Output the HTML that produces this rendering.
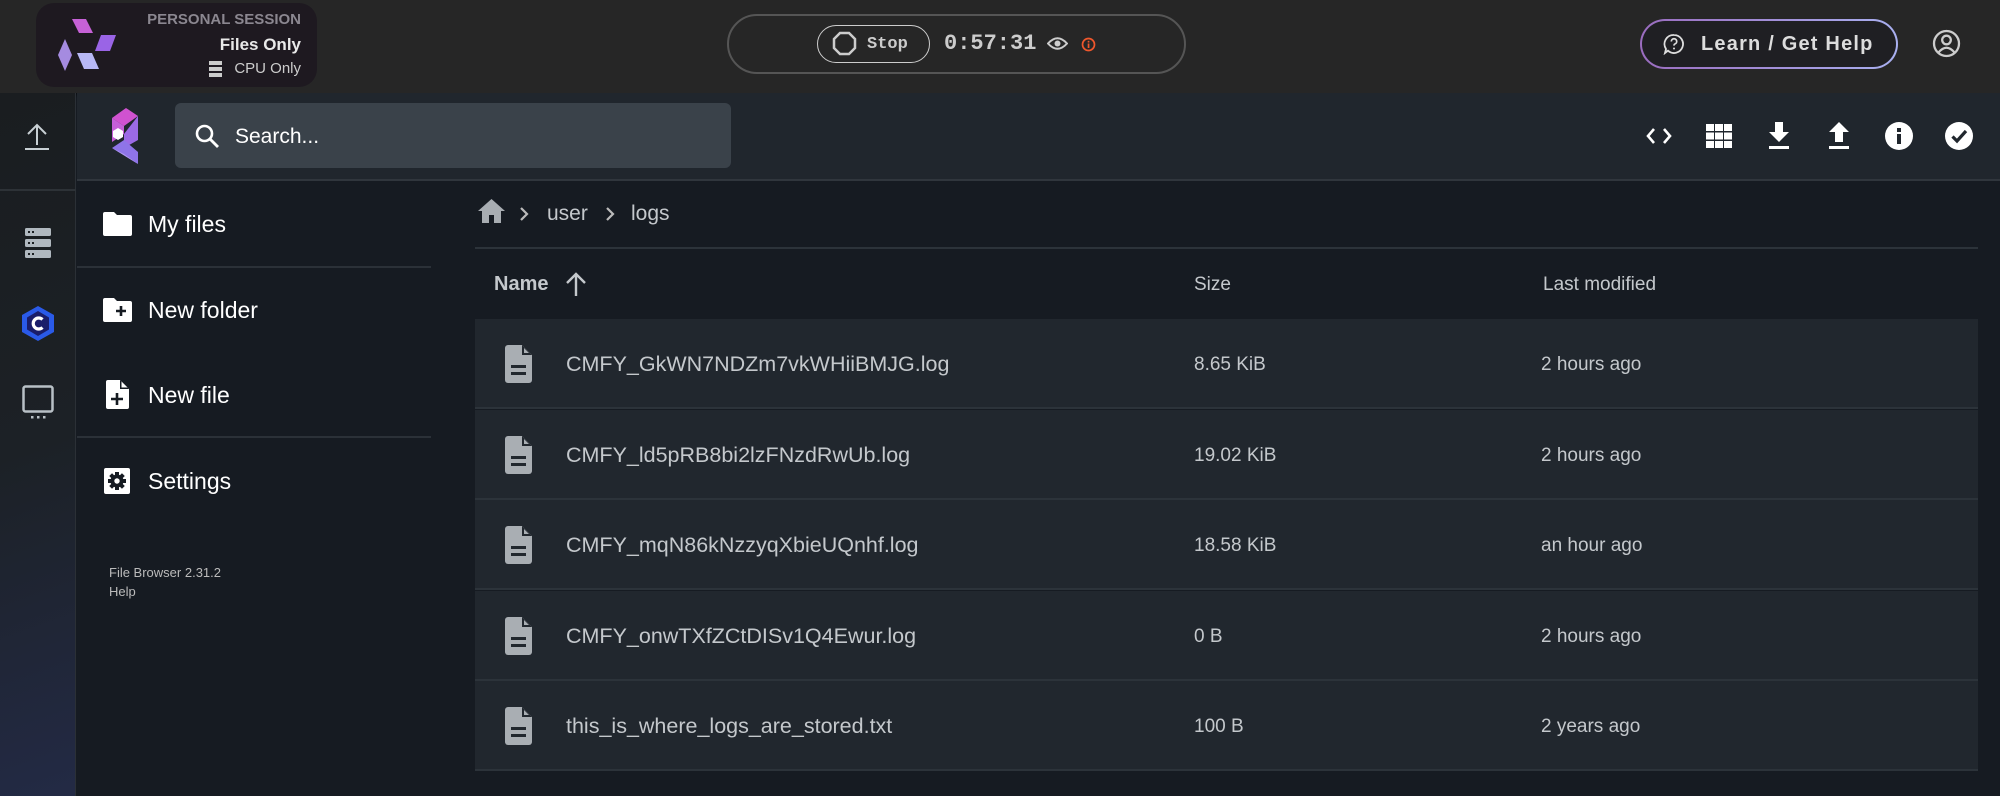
<!DOCTYPE html>
<html><head><meta charset="utf-8"><style>
*{box-sizing:border-box;margin:0;padding:0}
body{width:2000px;height:796px;overflow:hidden;background:#161b22;font-family:"Liberation Sans",sans-serif;position:relative}
.abs{position:absolute}
#top{left:0;top:0;width:2000px;height:93px;background:#262626;box-shadow:0 2px 4px rgba(0,0,0,.5)}
#rail{left:0;top:93px;width:76px;height:703px;background:linear-gradient(160deg,#1a1d20 0%,#1c2126 50%,#232a45 100%);border-right:1px solid #2b3036}
#hdr{left:77px;top:93px;width:1923px;height:88px;background:#20262d;border-bottom:2px solid #30363d}
.side{color:#fff;font-size:23px}
.hr{height:2px;background:#2b3138}
.row{left:475px;width:1503px;height:90px;background:#21272e;border-bottom:2px solid #2c333a}
.row .n{position:absolute;left:91px;top:33px;font-size:21.5px;color:#c4c8cc}
.row .s{position:absolute;left:719px;top:35px;font-size:19px;color:#c4c8cc}
.row .m{position:absolute;left:1066px;top:35px;font-size:19px;color:#c4c8cc}
.row svg{position:absolute;left:30px;top:26px}
.ic{fill:#fff}
</style></head><body>
<div id="top" class="abs"></div>
<div class="abs" style="left:36px;top:3px;width:281px;height:84px;border-radius:18px;background:#1e1920"></div>
<svg class="abs" style="left:55px;top:16px" width="75" height="58" viewBox="0 0 75 58">
<polygon points="17,3 31,3 38,17 24,17" fill="#c661d6"/>
<polygon points="46,19 61,19 55,35 40,35" fill="#9a64e6"/>
<polygon points="10,23 17,39 10,55 3,39" fill="#a58be0"/>
<polygon points="22,37 37,37 44,53 29,53" fill="#b8b8f5"/>
</svg>
<div class="abs" style="right:1699px;top:11px;font-size:15px;font-weight:bold;color:#8b8790;font-family:'Liberation Sans Narrow','Liberation Sans',sans-serif">PERSONAL SESSION</div>
<div class="abs" style="right:1699px;top:35px;font-size:17px;font-weight:bold;color:#e9e9e9">Files Only</div>
<div class="abs" style="right:1699px;top:60px;font-size:15px;color:#ccc">CPU Only</div>
<svg class="abs" style="left:209px;top:61px" width="13" height="16"><rect y="0" width="13" height="4" fill="#ccc"/><rect y="6" width="13" height="4" fill="#ccc"/><rect y="12" width="13" height="4" fill="#ccc"/></svg>

<div class="abs" style="left:727px;top:14px;width:459px;height:60px;border:2px solid #555;border-radius:30px"></div>
<div class="abs" style="left:817px;top:25px;width:113px;height:38px;border:1.5px solid #ccc;border-radius:19px"></div>
<svg class="abs" style="left:832px;top:31px" width="25" height="25" viewBox="0 0 25 25"><polygon points="8,2 17,2 23,8 23,17 17,23 8,23 2,17 2,8" fill="none" stroke="#ccc" stroke-width="2.5"/></svg>
<div class="abs" style="left:867px;top:35px;font-size:17px;font-weight:bold;color:#ccc;font-family:'Liberation Mono',monospace">Stop</div>
<div class="abs" style="left:944px;top:31px;font-size:22px;font-weight:bold;color:#ccc;font-family:'Liberation Mono',monospace">0:57:31</div>
<svg class="abs" style="left:1047px;top:36px" width="21" height="15" viewBox="0 0 21 15"><path d="M1 7.5Q10.5-3 20 7.5Q10.5 18 1 7.5Z" fill="none" stroke="#ccc" stroke-width="2"/><circle cx="10.5" cy="7.5" r="3" fill="#ccc"/></svg>
<svg class="abs" style="left:1081px;top:37px" width="15" height="15"><circle cx="7.5" cy="7.5" r="6" fill="none" stroke="#f0572c" stroke-width="1.7"/><rect x="6.7" y="6.5" width="1.7" height="4.5" fill="#f0572c"/><rect x="6.7" y="3.8" width="1.7" height="1.7" fill="#f0572c"/></svg>

<div class="abs" style="left:1640px;top:19px;width:258px;height:50px;border-radius:25px;background:linear-gradient(90deg,#9a6cbf,#a9b0f0);padding:2px"><div style="width:100%;height:100%;border-radius:23px;background:#1f1f23"></div></div>
<svg class="abs" style="left:1663px;top:33px" width="22" height="22" viewBox="0 0 22 22"><path d="M11 2a9 9 0 1 1-6 15.7L2 20l1-4A9 9 0 0 1 11 2z" fill="none" stroke="#ddd" stroke-width="1.8"/><path d="M8.3 8.5a2.7 2.7 0 1 1 3.6 2.5c-.7.3-.9.8-.9 1.6" fill="none" stroke="#ddd" stroke-width="1.7"/><circle cx="11" cy="15.5" r="1" fill="#ddd"/></svg>
<div class="abs" style="left:1701px;top:33px;font-size:20px;font-weight:bold;color:#ddd;letter-spacing:1.2px">Learn / Get Help</div>
<svg class="abs" style="left:1932px;top:29px" width="29" height="29" viewBox="0 0 29 29"><circle cx="14.5" cy="14.5" r="12.5" fill="none" stroke="#ccc" stroke-width="2.3"/><circle cx="14.5" cy="11" r="4.3" fill="none" stroke="#ccc" stroke-width="2.3"/><path d="M6.5 23.5Q14.5 14 22.5 23.5" fill="none" stroke="#ccc" stroke-width="2.3"/></svg>

<div id="rail" class="abs"></div>
<svg class="abs" style="left:23px;top:123px" width="28" height="28" viewBox="0 0 28 28"><path d="M14 2V22M5 11L14 2L23 11M2 26H26" fill="none" stroke="#c8d0d4" stroke-width="2"/></svg>
<div class="abs" style="left:0;top:189px;width:76px;height:2px;background:#2d3237"></div>
<svg class="abs" style="left:25px;top:228px" width="26" height="31"><g fill="#b0b8bf"><rect width="26" height="8" rx="1.5"/><rect y="11" width="26" height="8" rx="1.5"/><rect y="22" width="26" height="8" rx="1.5"/></g><g fill="#1b1f22"><rect x="3" y="3" width="2" height="2"/><rect x="7" y="3" width="2" height="2"/><rect x="3" y="14" width="2" height="2"/><rect x="7" y="14" width="2" height="2"/><rect x="3" y="25" width="2" height="2"/><rect x="7" y="25" width="2" height="2"/></g></svg>
<svg class="abs" style="left:21px;top:305px" width="34" height="37" viewBox="0 0 34 37"><polygon points="17,1 33,10 33,27 17,36 1,27 1,10" fill="#2a5ae8"/><polygon points="17,6 28,12.5 28,24.5 17,31 6,24.5 6,12.5" fill="#1a1d6a"/><path d="M21.5 14.5A5.5 5.5 0 1 0 21.5 22.5" fill="none" stroke="#fff" stroke-width="3.2"/></svg>
<svg class="abs" style="left:22px;top:385px" width="32" height="35"><rect x="1.5" y="1.5" width="29" height="25" rx="2" fill="none" stroke="#b8c0c6" stroke-width="2.5"/><g fill="#b8c0c6"><rect x="9" y="31" width="2.5" height="2.5"/><rect x="15" y="31" width="2.5" height="2.5"/><rect x="21" y="31" width="2.5" height="2.5"/></g></svg>

<div id="hdr" class="abs"></div>
<svg class="abs" style="left:110px;top:108px" width="32" height="56" viewBox="0 0 32 56"><polygon points="2,10 16,0 28,8 14,18" fill="#d052d0"/><polygon points="2,10 14,18 14,26 2,34" fill="#c65fd8"/><polygon points="28,8 28,32 14,40 14,26" fill="#9c6ae6"/><polygon points="2,40 14,32 28,44 28,56" fill="#8f74e8"/><polygon points="2,40 28,56 14,46" fill="#b19af0"/><polygon points="8,20 13,23 13,29 8,32 3,29 3,23" fill="#fff"/></svg>
<div class="abs" style="left:175px;top:103px;width:556px;height:65px;border-radius:6px;background:#3a424a"></div>
<svg class="abs" style="left:195px;top:124px" width="25" height="25" viewBox="0 0 25 25"><circle cx="9.5" cy="9.5" r="7.5" fill="none" stroke="#fff" stroke-width="2.6"/><path d="M15 15L23 23" stroke="#fff" stroke-width="2.8"/></svg>
<div class="abs" style="left:235px;top:125px;font-size:21px;color:#fff">Search...</div>

<svg class="abs" style="left:1645px;top:126px" width="28" height="20"><path d="M9 3L3 10L9 17M19 3L25 10L19 17" fill="none" stroke="#fff" stroke-width="2.6"/></svg>
<svg class="abs" style="left:1706px;top:124px" width="26" height="24"><g class="ic"><rect width="8" height="7"/><rect x="9" width="8" height="7"/><rect x="18" width="8" height="7"/><rect y="8.5" width="8" height="7"/><rect x="9" y="8.5" width="8" height="7"/><rect x="18" y="8.5" width="8" height="7"/><rect y="17" width="8" height="7"/><rect x="9" y="17" width="8" height="7"/><rect x="18" y="17" width="8" height="7"/></g></svg>
<svg class="abs" style="left:1768px;top:122px" width="22" height="27"><path class="ic" d="M7 0H15V10H21L11 20L1 10H7Z"/><rect class="ic" x="1" y="24" width="20" height="3"/></svg>
<svg class="abs" style="left:1828px;top:122px" width="22" height="27"><path class="ic" d="M7 20H15V10H21L11 0L1 10H7Z"/><rect class="ic" x="1" y="24" width="20" height="3"/></svg>
<svg class="abs" style="left:1885px;top:122px" width="28" height="28"><circle cx="14" cy="14" r="14" fill="#fff"/><rect x="12" y="12" width="4" height="10" fill="#20262d"/><rect x="12" y="6" width="4" height="4" fill="#20262d"/></svg>
<svg class="abs" style="left:1945px;top:122px" width="28" height="28"><circle cx="14" cy="14" r="14" fill="#fff"/><path d="M7.5 14.5L12 19L21 9" fill="none" stroke="#20262d" stroke-width="3.2"/></svg>

<!-- sidebar -->
<svg class="abs" style="left:103px;top:212px" width="29" height="24"><path class="ic" d="M2 0H11L14 3H27A2 2 0 0 1 29 5V22A2 2 0 0 1 27 24H2A2 2 0 0 1 0 22V2A2 2 0 0 1 2 0Z"/></svg>
<div class="abs side" style="left:148px;top:211px">My files</div>
<div class="abs hr" style="left:77px;top:266px;width:354px"></div>
<svg class="abs" style="left:103px;top:298px" width="29" height="24"><path class="ic" d="M2 0H11L14 3H27A2 2 0 0 1 29 5V22A2 2 0 0 1 27 24H2A2 2 0 0 1 0 22V2A2 2 0 0 1 2 0Z"/><path d="M18 8V18M13 13H23" stroke="#161b22" stroke-width="2.6"/></svg>
<div class="abs side" style="left:148px;top:297px">New folder</div>
<svg class="abs" style="left:106px;top:380px" width="23" height="29"><path class="ic" d="M2 0H14L23 9V27A2 2 0 0 1 21 29H2A2 2 0 0 1 0 27V2A2 2 0 0 1 2 0Z"/><path d="M14 0V9H23Z" fill="#161b22"/><path d="M15.5 1.5V7.5H21.5Z" fill="#fff"/><path d="M11 13V25M5 19H17" stroke="#161b22" stroke-width="2.6"/></svg>
<div class="abs side" style="left:148px;top:382px">New file</div>
<div class="abs hr" style="left:77px;top:436px;width:354px"></div>
<svg class="abs" style="left:104px;top:468px" width="26" height="26" viewBox="0 0 26 26"><rect width="26" height="26" rx="2" fill="#fff"/><g fill="#161b22"><circle cx="13" cy="13" r="6.5"/><rect x="11" y="4" width="4" height="18"/><rect x="4" y="11" width="18" height="4"/><rect x="11" y="4" width="4" height="18" transform="rotate(45 13 13)"/><rect x="11" y="4" width="4" height="18" transform="rotate(-45 13 13)"/></g><circle cx="13" cy="13" r="2.7" fill="#fff"/></svg>
<div class="abs side" style="left:148px;top:468px">Settings</div>
<div class="abs" style="left:109px;top:563px;font-size:13px;color:#bbb;line-height:19px">File Browser 2.31.2<br>Help</div>

<!-- breadcrumb -->
<svg class="abs" style="left:478px;top:199px" width="27" height="24"><path d="M13.5 0L27 12H23V24H16V16H11V24H4V12H0Z" fill="#a8adb2"/></svg>
<svg class="abs" style="left:519px;top:206px" width="10" height="16"><path d="M2 2L8 8L2 14" fill="none" stroke="#bbb" stroke-width="2.2"/></svg>
<div class="abs" style="left:547px;top:202px;font-size:21px;color:#c4c8cc">user</div>
<svg class="abs" style="left:605px;top:206px" width="10" height="16"><path d="M2 2L8 8L2 14" fill="none" stroke="#bbb" stroke-width="2.2"/></svg>
<div class="abs" style="left:631px;top:202px;font-size:21px;color:#c4c8cc">logs</div>
<div class="abs" style="left:475px;top:247px;width:1503px;height:2px;background:#2c333a"></div>

<div class="abs" style="left:494px;top:273px;font-size:20px;font-weight:bold;color:#c4c8cc">Name</div>
<svg class="abs" style="left:565px;top:272px" width="22" height="24"><path d="M11 24V2M2 11L11 2L20 11" fill="none" stroke="#c4c8cc" stroke-width="2.4"/></svg>
<div class="abs" style="left:1194px;top:274px;font-size:19px;color:#c4c8cc">Size</div>
<div class="abs" style="left:1543px;top:274px;font-size:19px;color:#c4c8cc">Last modified</div>

<div class="abs row" style="top:319px"><svg width="27" height="38" viewBox="0 0 27 38"><path d="M3 0H17L27 10V35A3 3 0 0 1 24 38H3A3 3 0 0 1 0 35V3A3 3 0 0 1 3 0Z" fill="#a9aeb3"/><path d="M17 0V10H27Z" fill="#21272e"/><path d="M19 3V8H24Z" fill="#a9aeb3"/><rect x="6" y="20" width="15" height="3" fill="#21272e"/><rect x="6" y="27" width="15" height="3" fill="#21272e"/></svg><div class="n">CMFY_GkWN7NDZm7vkWHiiBMJG.log</div><div class="s">8.65 KiB</div><div class="m">2 hours ago</div></div>
<div class="abs row" style="top:410px"><svg width="27" height="38" viewBox="0 0 27 38"><path d="M3 0H17L27 10V35A3 3 0 0 1 24 38H3A3 3 0 0 1 0 35V3A3 3 0 0 1 3 0Z" fill="#a9aeb3"/><path d="M17 0V10H27Z" fill="#21272e"/><path d="M19 3V8H24Z" fill="#a9aeb3"/><rect x="6" y="20" width="15" height="3" fill="#21272e"/><rect x="6" y="27" width="15" height="3" fill="#21272e"/></svg><div class="n">CMFY_ld5pRB8bi2lzFNzdRwUb.log</div><div class="s">19.02 KiB</div><div class="m">2 hours ago</div></div>
<div class="abs row" style="top:500px"><svg width="27" height="38" viewBox="0 0 27 38"><path d="M3 0H17L27 10V35A3 3 0 0 1 24 38H3A3 3 0 0 1 0 35V3A3 3 0 0 1 3 0Z" fill="#a9aeb3"/><path d="M17 0V10H27Z" fill="#21272e"/><path d="M19 3V8H24Z" fill="#a9aeb3"/><rect x="6" y="20" width="15" height="3" fill="#21272e"/><rect x="6" y="27" width="15" height="3" fill="#21272e"/></svg><div class="n">CMFY_mqN86kNzzyqXbieUQnhf.log</div><div class="s">18.58 KiB</div><div class="m">an hour ago</div></div>
<div class="abs row" style="top:591px"><svg width="27" height="38" viewBox="0 0 27 38"><path d="M3 0H17L27 10V35A3 3 0 0 1 24 38H3A3 3 0 0 1 0 35V3A3 3 0 0 1 3 0Z" fill="#a9aeb3"/><path d="M17 0V10H27Z" fill="#21272e"/><path d="M19 3V8H24Z" fill="#a9aeb3"/><rect x="6" y="20" width="15" height="3" fill="#21272e"/><rect x="6" y="27" width="15" height="3" fill="#21272e"/></svg><div class="n">CMFY_onwTXfZCtDISv1Q4Ewur.log</div><div class="s">0 B</div><div class="m">2 hours ago</div></div>
<div class="abs row" style="top:681px"><svg width="27" height="38" viewBox="0 0 27 38"><path d="M3 0H17L27 10V35A3 3 0 0 1 24 38H3A3 3 0 0 1 0 35V3A3 3 0 0 1 3 0Z" fill="#a9aeb3"/><path d="M17 0V10H27Z" fill="#21272e"/><path d="M19 3V8H24Z" fill="#a9aeb3"/><rect x="6" y="20" width="15" height="3" fill="#21272e"/><rect x="6" y="27" width="15" height="3" fill="#21272e"/></svg><div class="n">this_is_where_logs_are_stored.txt</div><div class="s">100 B</div><div class="m">2 years ago</div></div>
</body></html>
